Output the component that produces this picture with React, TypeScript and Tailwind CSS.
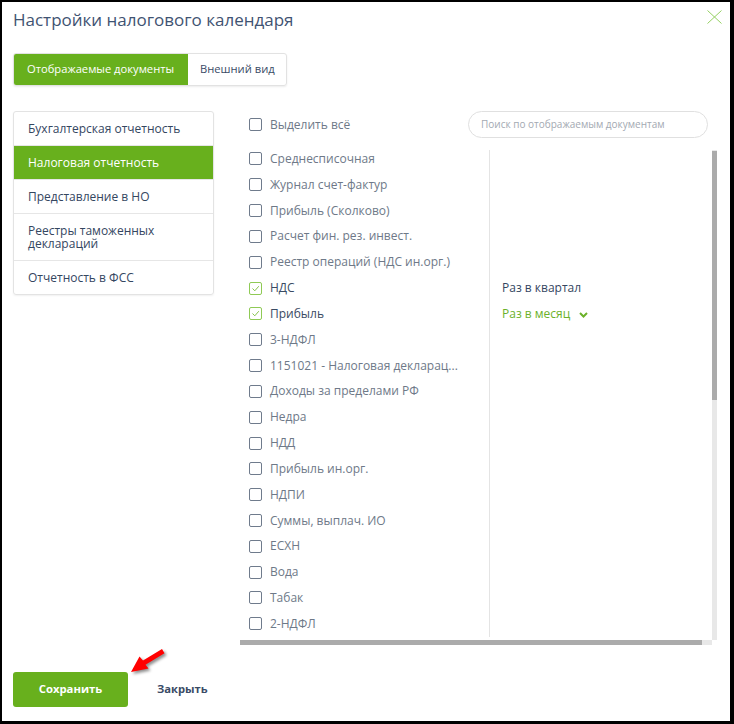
import React from "react";

type Row = { label: string; checked?: boolean; period?: "q" | "m" };

const rows: Row[] = [
  { label: "Среднесписочная" },
  { label: "Журнал счет-фактур" },
  { label: "Прибыль (Сколково)" },
  { label: "Расчет фин. рез. инвест." },
  { label: "Реестр операций (НДС ин.орг.)" },
  { label: "НДС", checked: true, period: "q" },
  { label: "Прибыль", checked: true, period: "m" },
  { label: "3-НДФЛ" },
  { label: "1151021 - Налоговая декларац..." },
  { label: "Доходы за пределами РФ" },
  { label: "Недра" },
  { label: "НДД" },
  { label: "Прибыль ин.орг." },
  { label: "НДПИ" },
  { label: "Суммы, выплач. ИО" },
  { label: "ЕСХН" },
  { label: "Вода" },
  { label: "Табак" },
  { label: "2-НДФЛ" },
];

const menu = [
  { label: "Бухгалтерская отчетность" },
  { label: "Налоговая отчетность", active: true },
  { label: "Представление в НО" },
  { label: "Реестры таможенных деклараций" },
  { label: "Отчетность в ФСС" },
];

function Checkbox({ checked }: { checked?: boolean }) {
  return (
    <span
      className={
        checked
          ? "flex h-[13px] w-[13px] shrink-0 items-center justify-center rounded-[2px] border border-[#8fca55] bg-white"
          : "flex h-[13px] w-[13px] shrink-0 items-center justify-center rounded-[2px] border border-[#6f7b8c] bg-white"
      }
    >
      {checked && (
        <svg width="9" height="9" viewBox="0 0 9 9" fill="none">
          <path d="M1.5 4.5 L3.8 6.8 L7.8 2.2" stroke="#86c34a" strokeWidth="1" />
        </svg>
      )}
    </span>
  );
}

export default function App() {
  return (
    <div
      className="relative box-border flex h-[724px] w-[734px] flex-col border-b-[3px] border-l-2 border-r-4 border-t-2 border-black bg-white pl-[11px] pr-[8px] text-[#34465f]"
      style={{ fontFamily: '"Open Sans", "Noto Sans", sans-serif' }}
    >
      {/* Header */}
      <div className="mt-[4px] flex items-start justify-between">
        <h1 className="h-[28px] text-[17px] leading-[28px] font-normal text-[#3f5372]">
          Настройки налогового календаря
        </h1>
        <svg className="mt-[4px]" width="15" height="14" viewBox="0 0 15 14" fill="none">
          <path d="M0.5 0.5 L14.5 13.5 M14.5 0.5 L0.5 13.5" stroke="#95d062" strokeWidth="1" />
        </svg>
      </div>

      {/* Tabs */}
      <div className="mt-[19px] flex h-[33px] w-[274px] overflow-hidden rounded-[3px] border border-[#e2e2e2] shadow-[0_1px_2px_rgba(0,0,0,0.08)]">
        <div className="flex w-[174px] items-center bg-[#68b01d] pl-[13px] text-[11.2px] text-white">
          Отображаемые документы
        </div>
        <div className="flex flex-1 items-center pl-[12px] text-[11.2px] text-[#3a4b66]">
          Внешний вид
        </div>
      </div>

      {/* Main */}
      <div className="mt-[25px] flex h-[534px]">
        {/* Left menu */}
        <div className="flex h-[184px] w-[201px] shrink-0 flex-col overflow-hidden rounded-[3px] border border-[#e3e3e3] shadow-[0_1px_2px_rgba(0,0,0,0.06)]">
          {menu.map((m, i) => (
            <div
              key={m.label}
              className={
                (m.active ? "bg-[#68b01d] text-white " : "text-[#34465f] ") +
                (i < menu.length - 1 ? "border-b border-[#e6e6e6] " : "") +
                "py-[10px] pl-[14px] pr-[10px] text-[12px] leading-[13px]"
              }
            >
              {m.label}
            </div>
          ))}
        </div>

        {/* Right area */}
        <div className="ml-[26px] flex w-[477px] flex-col">
          <div className="flex h-[27px] items-center">
            <div className="flex items-center pl-[9px]">
              <Checkbox />
              <span className="ml-[8px] text-[12px] text-[#6e7988]">Выделить всё</span>
            </div>
            <div className="ml-auto mr-[9px] flex h-[27px] w-[240px] items-center rounded-full border border-[#e0e0e0] pl-[12px] text-[10px] text-[#a3a9b2]">
              Поиск по отображаемым документам
            </div>
          </div>

          {/* Scroll region */}
          <div className="mt-[12px] flex h-[495px] flex-col">
            <div className="flex h-[490px]">
              <div className="h-[490px] w-[472px] overflow-hidden">
                <div className="-mt-[4px] flex flex-col">
                  {rows.map((r) => (
                    <div key={r.label} className="flex h-[25.83px]">
                      <div className="flex w-[249px] items-center pl-[9px]">
                        <Checkbox checked={r.checked} />
                        <span
                          className={
                            "ml-[8px] whitespace-nowrap text-[12px] " +
                            (r.checked ? "text-[#3a4b63]" : "text-[#6e7988]")
                          }
                        >
                          {r.label}
                        </span>
                      </div>
                      <div className="flex flex-1 items-center border-l border-[#e4e4e4] pl-[12px] text-[12px]">
                        {r.period === "q" && <span className="text-[#34465f]">Раз в квартал</span>}
                        {r.period === "m" && (
                          <span className="flex items-center text-[#6cb12a]">
                            Раз в месяц
                            <svg className="ml-[9px] mt-[2px]" width="9" height="6" viewBox="0 0 9 6" fill="none">
                              <path d="M1 1 L4.5 4.5 L8 1" stroke="#6cb12a" strokeWidth="2" />
                            </svg>
                          </span>
                        )}
                      </div>
                    </div>
                  ))}
                </div>
              </div>
              {/* vertical scrollbar */}
              <div className="flex h-[490px] w-[5px] flex-col bg-[#e8e8e8]">
                <div className="h-[1px]" />
                <div className="h-[249px] w-[5px] bg-[#ababab]" />
              </div>
            </div>
            {/* horizontal scrollbar */}
            <div className="flex h-[5px]">
              <div className="flex h-[5px] w-[472px] bg-[#e8e8e8]">
                <div className="h-[5px] w-[462px] bg-[#ababab]" />
              </div>
            </div>
          </div>
        </div>
      </div>

      {/* Footer buttons */}
      <div className="mt-[27px] flex h-[35px] items-center">
        <div className="flex h-[35px] w-[115px] items-center justify-center rounded-[3px] bg-[#68b01d] text-[11.3px] font-bold text-white">
          Сохранить
        </div>
        <div className="ml-[29px] text-[11.2px] font-bold text-[#3a4b66]">Закрыть</div>
      </div>

      {/* Red annotation arrow */}
      <svg
        className="absolute left-[124px] top-[644px] drop-shadow-[2px_2px_1.5px_rgba(0,0,0,0.45)]"
        width="44"
        height="32"
        viewBox="0 0 44 32"
      >
        <polygon
          points="5,26 13.5,10.5 17,14.6 36,3 38.5,7.2 19.5,18.7 22.5,22.6"
          fill="#ff0000"
        />
      </svg>
    </div>
  );
}
